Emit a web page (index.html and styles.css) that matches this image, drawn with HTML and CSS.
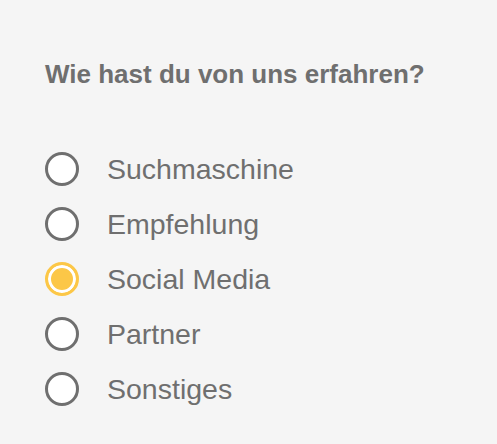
FILE: index.html
```html
<!DOCTYPE html>
<html lang="de">
<head>
<meta charset="utf-8">
<link rel="stylesheet" href="styles.css">
</head>
<body>
<form class="survey">
  <h2 class="question">Wie hast du von uns erfahren?</h2>
  <div class="options">
    <label class="option"><span class="radio"></span><span class="label">Suchmaschine</span></label>
    <label class="option"><span class="radio"></span><span class="label">Empfehlung</span></label>
    <label class="option"><span class="radio checked"></span><span class="label">Social Media</span></label>
    <label class="option"><span class="radio"></span><span class="label">Partner</span></label>
    <label class="option"><span class="radio"></span><span class="label">Sonstiges</span></label>
  </div>
</form>
</body>
</html>
```
FILE: styles.css
```css
html, body {
  margin: 0;
  padding: 0;
  background: #f5f5f5;
}
body {
  font-family: "Liberation Sans", Arial, sans-serif;
  color: #6f6f6f;
  width: 497px;
  height: 444px;
  overflow: hidden;
}
.survey {
  padding: 58px 0 0 45px;
}
.question {
  margin: 0;
  font-size: 26px;
  font-weight: 700;
  line-height: 32px;
}
.options {
  margin-top: 62px;
  display: flex;
  flex-direction: column;
  gap: 21px;
}
.option {
  display: flex;
  align-items: center;
  gap: 28px;
  height: 34px;
}
.radio {
  box-sizing: border-box;
  width: 34px;
  height: 34px;
  border-radius: 50%;
  border: 3px solid #6f6f6f;
  background: #fff;
  flex: none;
}
.radio.checked {
  border-color: #fcc747;
  background: #fcc747;
  box-shadow: inset 0 0 0 3px #fff;
}
.label {
  font-size: 28.5px;
  line-height: 34px;
}
```
